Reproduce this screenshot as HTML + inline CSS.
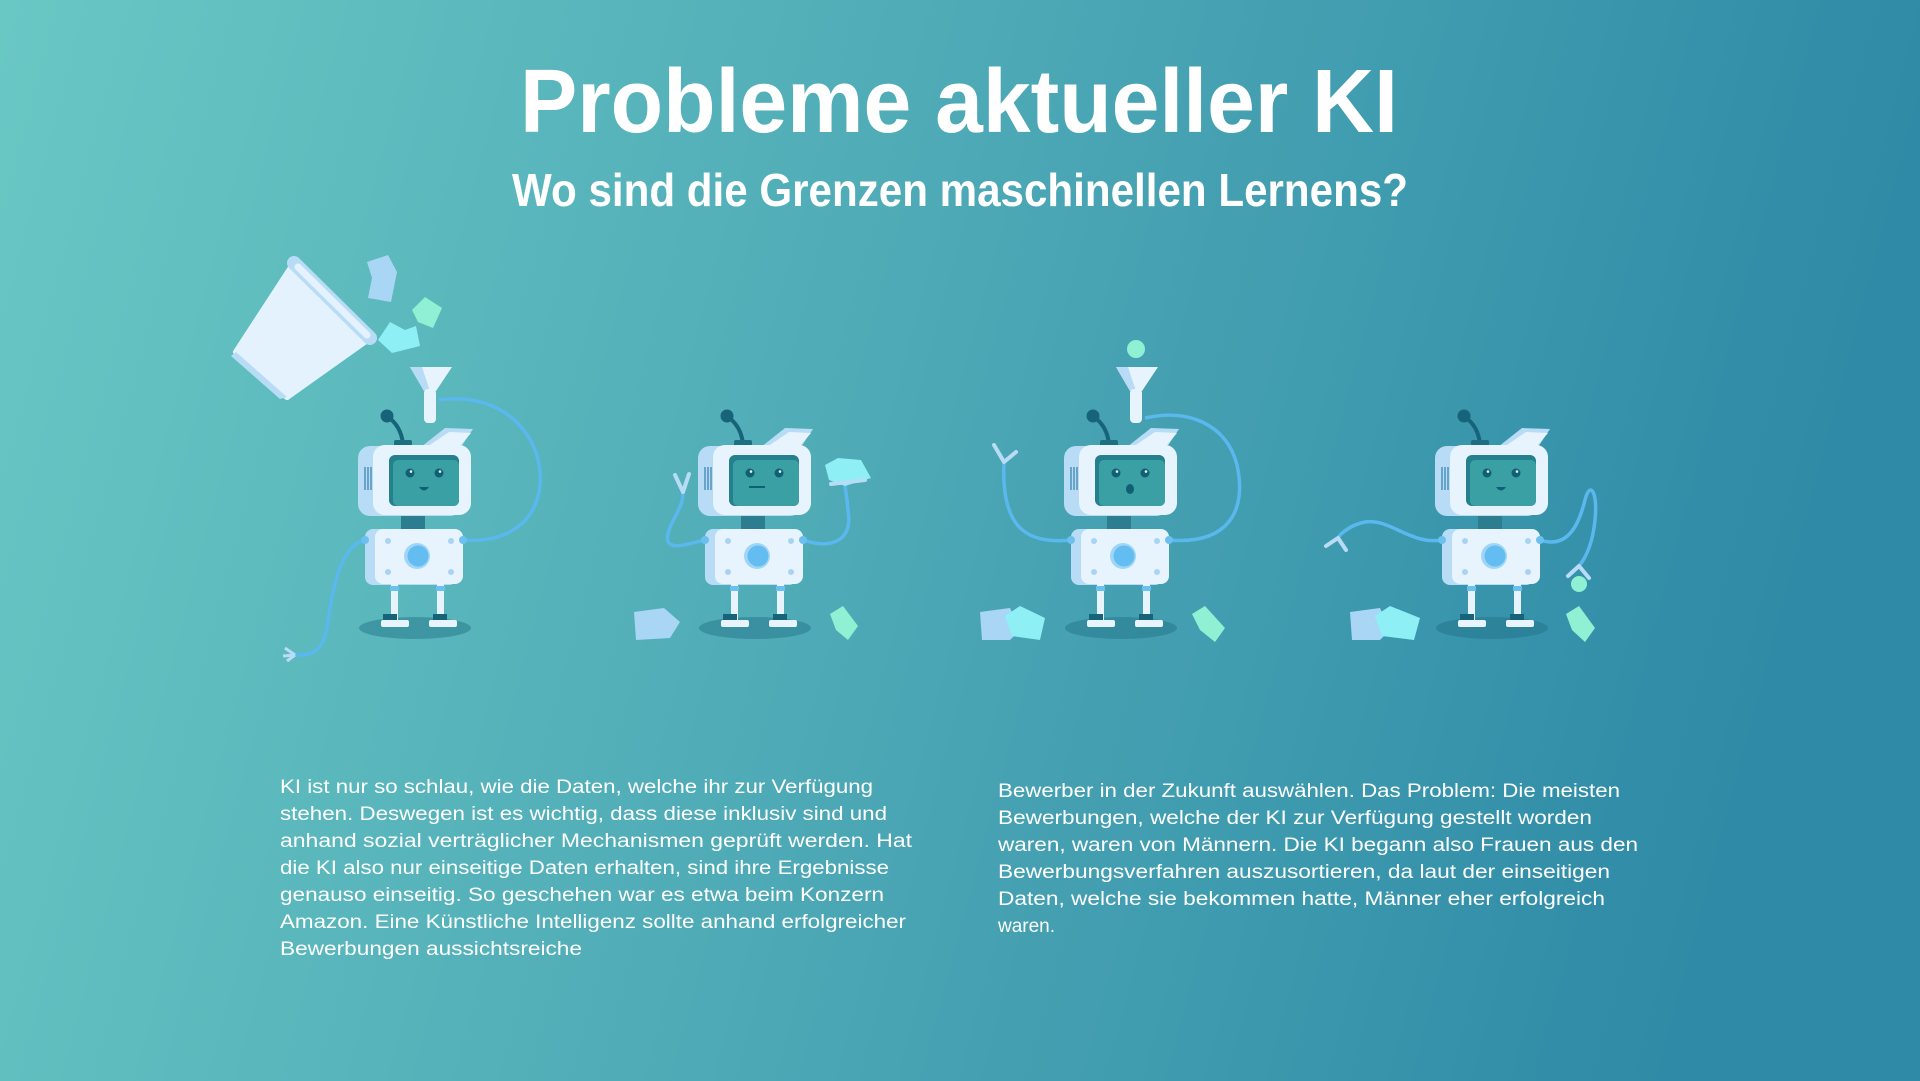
<!DOCTYPE html>
<html><head><meta charset="utf-8"><style>
html,body{margin:0;padding:0;width:1920px;height:1081px;overflow:hidden}
svg{display:block}
text{font-family:"Liberation Sans",sans-serif;fill:#fff}
</style></head><body>
<svg width="1920" height="1081" viewBox="0 0 1920 1081" xmlns="http://www.w3.org/2000/svg">
<defs>
<linearGradient id="bg" x1="0" y1="0" x2="1" y2="0.15">
<stop offset="0" stop-color="#69c8c4"/><stop offset="0.5" stop-color="#4eaab6"/><stop offset="1" stop-color="#2e8aa6"/>
</linearGradient>
<g id="bot">
<ellipse cx="2" cy="628" rx="56" ry="11" fill="#1f6f86" opacity="0.45"/>
<path d="M-10 444 Q-12 426 -25 417" stroke="#17647a" stroke-width="4" fill="none"/>
<circle cx="-26" cy="416" r="6.5" fill="#17647a"/>
<rect x="-19" y="440" width="18" height="6" rx="2" fill="#1d6f82"/>
<polygon points="8,447 32,428 60,429 48,447" fill="#b8dcf6"/>
<polygon points="14,447 36,432 58,433 46,447" fill="#e7f4fe"/>
<rect x="-12" y="512" width="24" height="20" fill="#2b7d8f"/>
<rect x="-55" y="446" width="104" height="70" rx="12" fill="#b8dcf6"/>
<rect x="-40" y="445" width="98" height="70" rx="12" fill="#e7f4fe"/>
<rect x="-24" y="455" width="70" height="51" rx="6" fill="#23808c"/>
<rect x="-20" y="460" width="66" height="46" rx="5" fill="#3aa0a4"/>
<circle cx="-3" cy="473" r="4.5" fill="#0f5f75"/><circle cx="26" cy="473" r="4.5" fill="#0f5f75"/>
<circle cx="-2" cy="471.5" r="1.3" fill="#fff"/><circle cx="27" cy="471.5" r="1.3" fill="#fff"/>
<g stroke="#5595bf" stroke-width="1.6"><line x1="-48" y1="467" x2="-48" y2="490"/><line x1="-45" y1="467" x2="-45" y2="490"/><line x1="-42" y1="467" x2="-42" y2="490"/></g>
<rect x="-48" y="529" width="92" height="56" rx="8" fill="#b8dcf6"/>
<rect x="-38" y="529" width="88" height="55" rx="8" fill="#e7f4fe"/>
<g fill="#a9d3f2"><circle cx="-25" cy="541" r="3"/><circle cx="38" cy="541" r="3"/><circle cx="-25" cy="572" r="3"/><circle cx="38" cy="572" r="3"/></g>
<circle cx="4" cy="556" r="13" fill="#9fd6f7"/><circle cx="5" cy="556" r="10.5" fill="#63bdf0"/>
<rect x="-22" y="584" width="7" height="36" fill="#e7f4fe"/><rect x="24" y="584" width="7" height="36" fill="#e7f4fe"/>
<rect x="-23" y="586" width="9" height="5" fill="#6cc0f0"/><rect x="23" y="586" width="9" height="5" fill="#6cc0f0"/>
<rect x="-30" y="614" width="14" height="6" fill="#17647a"/><rect x="20" y="614" width="14" height="6" fill="#17647a"/>
<rect x="-32" y="620" width="28" height="7" rx="2" fill="#e7f4fe"/><rect x="16" y="620" width="28" height="7" rx="2" fill="#e7f4fe"/>
</g>
<g id="funnel">
<polygon points="-20,0 22,0 6,24 -6,24" fill="#e7f4fe"/>
<polygon points="-20,0 -8,0 0,24 -6,24" fill="#b8dcf6"/>
<rect x="-6" y="22" width="12" height="34" rx="4" fill="#e7f4fe"/>
</g>
</defs>
<rect width="1920" height="1081" fill="url(#bg)"/>

<text x="520" y="132" font-size="90" font-weight="bold" textLength="878" lengthAdjust="spacingAndGlyphs">Probleme aktueller KI</text>
<text x="512" y="206" font-size="46" font-weight="bold" textLength="896" lengthAdjust="spacingAndGlyphs">Wo sind die Grenzen maschinellen Lernens?</text>

<!-- bucket and debris robot 1 -->
<polygon points="294,263 370,338 287,397 236,352" fill="#e4f2fe" stroke="#e4f2fe" stroke-width="6" stroke-linejoin="round"/>
<polygon points="236,352 287,397 280,399 231,356" fill="#b8dcf6"/>
<line x1="294" y1="263" x2="370" y2="338" stroke="#b8dcf6" stroke-width="14" stroke-linecap="round"/>
<line x1="298" y1="267" x2="367" y2="335" stroke="#e4f2fe" stroke-width="7" stroke-linecap="round"/>
<polygon points="367,262 388,255 397,272 391,302 368,298 372,278" fill="#a9d6f5"/>
<polygon points="412,310 425,297 442,308 433,328 418,322" fill="#8ff0d4"/>
<polygon points="378,340 390,322 405,330 416,326 420,346 392,353" fill="#8ef0f5"/>

<!-- robot 1 -->
<g transform="translate(413,0)">
<path d="M50 540 C120 545 140 490 120 445 C100 405 60 395 26 400" stroke="#5ab8ee" stroke-width="3.5" fill="none"/>
<path d="M-48 540 C-75 545 -82 600 -86 628 C-90 650 -100 656 -118 655" stroke="#5ab8ee" stroke-width="3.5" fill="none"/>
<path d="M-118 655 L-128 648 M-118 655 L-130 656 M-118 655 L-126 661" stroke="#b8dcf6" stroke-width="3"/>
<use href="#bot"/>
<use href="#funnel" transform="translate(17,367)"/>
<circle cx="50" cy="540" r="4" fill="#6cc0f0"/><circle cx="-48" cy="540" r="4" fill="#6cc0f0"/>
</g>

<!-- robot 2 -->
<g transform="translate(753,0)">
<path d="M-48 540 C-70 545 -95 555 -82 525 C-75 510 -70 505 -70 492" stroke="#5ab8ee" stroke-width="3.5" fill="none"/>
<path d="M-70 492 L-78 475 M-70 492 L-64 474" stroke="#b8dcf6" stroke-width="4" stroke-linecap="round"/>
<path d="M50 540 C80 550 100 540 95 510 C94 495 92 490 92 484" stroke="#5ab8ee" stroke-width="3.5" fill="none"/>
<polygon points="72,465 85,458 108,460 118,478 92,486 76,480" fill="#8ef0f5"/>
<line x1="78" y1="484" x2="112" y2="480" stroke="#b8dcf6" stroke-width="4" stroke-linecap="round"/>
<use href="#bot"/>
<rect x="-4" y="486" width="16" height="2" fill="#0f5f75"/>
<circle cx="50" cy="540" r="4" fill="#6cc0f0"/><circle cx="-48" cy="540" r="4" fill="#6cc0f0"/>
</g>
<polygon points="634,612 664,608 680,622 670,638 636,640" fill="#a9d6f5"/>
<polygon points="830,614 843,606 858,626 848,640 836,630" fill="#8ff0d4"/>

<!-- robot 3 -->
<g transform="translate(1119,0)">
<path d="M-48 540 C-95 545 -118 525 -115 462" stroke="#5ab8ee" stroke-width="3.5" fill="none"/>
<path d="M-115 462 L-125 445 M-115 462 L-103 452" stroke="#b8dcf6" stroke-width="4" stroke-linecap="round"/>
<path d="M50 540 C110 545 128 510 118 465 C108 425 70 408 26 418" stroke="#5ab8ee" stroke-width="3.5" fill="none"/>
<use href="#bot"/>
<ellipse cx="11" cy="489" rx="4" ry="5" fill="#0f5f75"/>
<use href="#funnel" transform="translate(17,367)"/>
<circle cx="17" cy="349" r="9" fill="#8ff0d4"/>
<circle cx="50" cy="540" r="4" fill="#6cc0f0"/><circle cx="-48" cy="540" r="4" fill="#6cc0f0"/>
</g>
<polygon points="980,612 1010,608 1020,630 1010,640 982,640" fill="#a9d6f5"/>
<polygon points="1005,616 1020,606 1045,618 1040,640 1012,636" fill="#8ef0f5"/>
<polygon points="1192,614 1205,606 1225,628 1215,642 1200,630" fill="#8ff0d4"/>

<!-- robot 4 -->
<g transform="translate(1490,0)">
<path d="M-48 540 C-80 545 -100 518 -125 522 C-140 525 -150 534 -152 538" stroke="#5ab8ee" stroke-width="3.5" fill="none"/>
<path d="M-152 538 L-164 546 M-152 538 L-144 550" stroke="#b8dcf6" stroke-width="4" stroke-linecap="round"/>
<path d="M50 540 C80 550 90 520 95 500 C100 480 108 492 105 520 C103 540 98 555 89 566" stroke="#5ab8ee" stroke-width="3.5" fill="none"/>
<path d="M89 566 L78 576 M89 566 L99 578" stroke="#b8dcf6" stroke-width="4" stroke-linecap="round"/>
<circle cx="89" cy="584" r="8" fill="#8ff0d4"/>
<use href="#bot"/>
<path d="M6 487 Q11 494 16 487 Z" fill="#0f5f75"/>
<circle cx="50" cy="540" r="4" fill="#6cc0f0"/><circle cx="-48" cy="540" r="4" fill="#6cc0f0"/>
</g>
<polygon points="1350,612 1380,608 1390,630 1380,640 1352,640" fill="#a9d6f5"/>
<polygon points="1375,616 1390,606 1420,618 1414,640 1382,636" fill="#8ef0f5"/>
<polygon points="1566,614 1579,606 1595,628 1585,642 1572,630" fill="#8ff0d4"/>

<path d="M419 487 Q424 494 429 487 Z" fill="#0f5f75"/>

<!-- body text -->
<g font-size="19">
<text x="280" y="793" textLength="593" lengthAdjust="spacingAndGlyphs">KI ist nur so schlau, wie die Daten, welche ihr zur Verfügung</text>
<text x="280" y="820" textLength="607" lengthAdjust="spacingAndGlyphs">stehen. Deswegen ist es wichtig, dass diese inklusiv sind und</text>
<text x="280" y="847" textLength="632" lengthAdjust="spacingAndGlyphs">anhand sozial verträglicher Mechanismen geprüft werden. Hat</text>
<text x="280" y="874" textLength="609" lengthAdjust="spacingAndGlyphs">die KI also nur einseitige Daten erhalten, sind ihre Ergebnisse</text>
<text x="280" y="901" textLength="604" lengthAdjust="spacingAndGlyphs">genauso einseitig. So geschehen war es etwa beim Konzern</text>
<text x="280" y="928" textLength="626" lengthAdjust="spacingAndGlyphs">Amazon. Eine Künstliche Intelligenz sollte anhand erfolgreicher</text>
<text x="280" y="955" textLength="302" lengthAdjust="spacingAndGlyphs">Bewerbungen aussichtsreiche</text>

<text x="998" y="797" textLength="622" lengthAdjust="spacingAndGlyphs">Bewerber in der Zukunft auswählen. Das Problem: Die meisten</text>
<text x="998" y="824" textLength="594" lengthAdjust="spacingAndGlyphs">Bewerbungen, welche der KI zur Verfügung gestellt worden</text>
<text x="998" y="851" textLength="640" lengthAdjust="spacingAndGlyphs">waren, waren von Männern. Die KI begann also Frauen  aus den</text>
<text x="998" y="878" textLength="612" lengthAdjust="spacingAndGlyphs">Bewerbungsverfahren auszusortieren, da laut der einseitigen</text>
<text x="998" y="905" textLength="607" lengthAdjust="spacingAndGlyphs">Daten, welche sie bekommen hatte, Männer eher erfolgreich</text>
<text x="998" y="932">waren.</text>
</g>
</svg>
</body></html>
